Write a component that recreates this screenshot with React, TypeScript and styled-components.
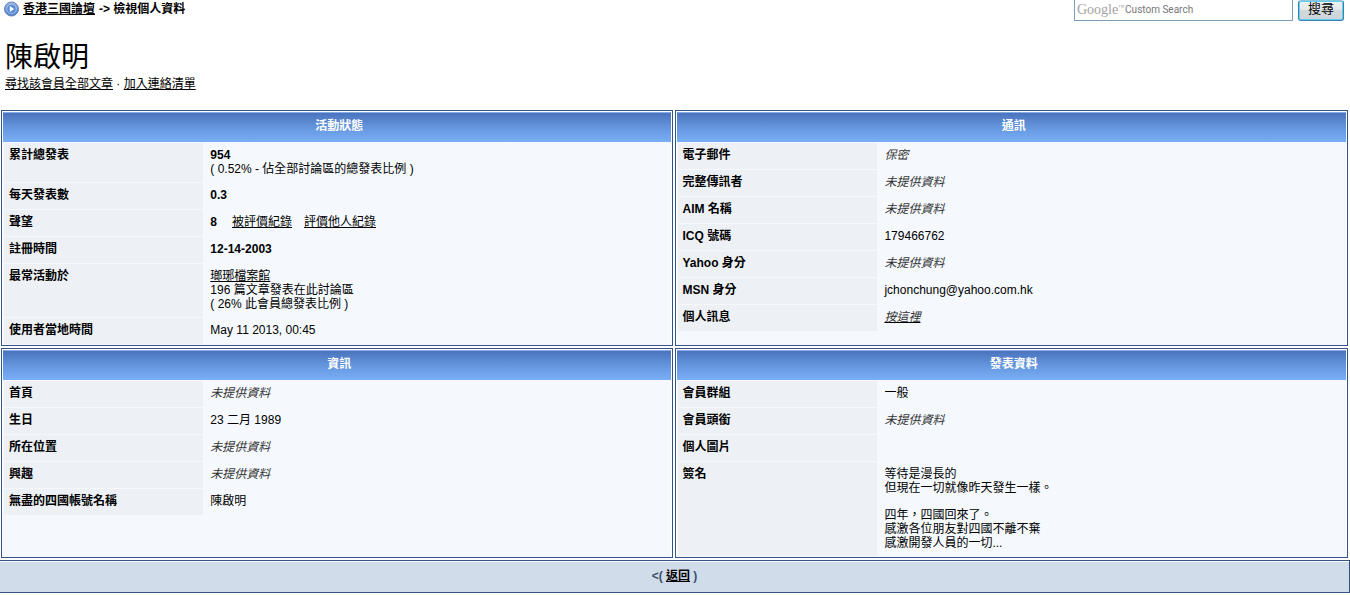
import React from "react";
import styled, { createGlobalStyle } from "styled-components";

const GlobalStyle = createGlobalStyle`
  * { box-sizing: border-box; }
  body {
    margin: 0;
    background: #fff;
    color: #000;
    font: 12px/14px "Liberation Sans", "Noto Sans CJK TC", sans-serif;
  }
  a { color: #000; text-decoration: underline; }
`;

const TopBar = styled.header`
  display: flex;
  justify-content: space-between;
  align-items: flex-start;
  height: 21px;
  padding: 0 6px 0 4px;
`;

const Breadcrumb = styled.nav`
  display: flex;
  align-items: center;
  gap: 4px;
  height: 18px;
  font-weight: bold;
`;

const SearchForm = styled.form`
  display: flex;
  gap: 5px;
`;

const SearchBox = styled.label`
  display: flex;
  align-items: center;
  gap: 1px;
  width: 219px;
  height: 21px;
  padding-left: 2px;
  border: 1px solid #7e9db9;
  border-top: 0;
  background: #fff;
`;

const Brand = styled.span`
  display: flex;
  color: #a3a3a3;
  font-family: "Liberation Serif", serif;
  font-size: 14px;

  sup {
    font-size: 6px;
    line-height: 8px;
    vertical-align: top;
  }
`;

const SearchInput = styled.input`
  flex: 1;
  min-width: 0;
  padding: 0;
  border: 0;
  outline: 0;
  background: transparent;
  font: 10px/14px Roboto, sans-serif;

  &::placeholder { color: #777; opacity: 1; }
`;

const SearchButton = styled.button`
  width: 46px;
  height: 21px;
  padding: 0 0 4px;
  border: 1px solid #3c7fb1;
  border-top-color: #8fc4dd;
  border-radius: 3px;
  background: linear-gradient(#f0f2f3, #e4e8ea 45%, #d3dade 50%, #ccd4d9);
  box-shadow: inset 0 0 0 1px #5fd0f0;
  color: #000;
  font: 13px/16px "Liberation Sans", "Noto Sans CJK TC", sans-serif;
`;

const Member = styled.section`
  padding: 18px 5px 19px;
`;

const MemberName = styled.h1`
  margin: 0;
  font-size: 28px;
  font-weight: 400;
  line-height: 38px;
`;

const MemberLinks = styled.p`
  margin: 0;
`;

const Panels = styled.main`
  display: grid;
  grid-template-columns: calc(50% - 2px) 1fr;
  gap: 2px;
  padding: 0 2px 2px 1px;
`;

const Panel = styled.section`
  padding: 1px 1px 0;
  border: 1px solid #345487;
  background: #f5f9fd;
  background-clip: content-box;
`;

const PanelTitle = styled.h2`
  height: 30px;
  margin: 0;
  padding: 6px 0 0 5px;
  border-top: 1px solid #86abe4;
  background: linear-gradient(#4a74bd, #6496de 50%, #79aff6);
  color: #fff;
  font-size: 12px;
  line-height: 14px;
  text-align: center;
`;

const Details = styled.table`
  width: 100%;
  border-spacing: 1px;
  table-layout: fixed;
`;

const Label = styled.th`
  width: 30%;
  height: 26px;
  padding: 5px 5px 6px;
  background: #edf0f5;
  text-align: left;
  vertical-align: top;
`;

const Value = styled.td`
  padding: 5px 6px 6px;
  vertical-align: top;
`;

const Missing = styled.i`
  color: #333;
`;

const Reputation = styled.div`
  display: flex;
  gap: 12px;

  b { margin-right: 3px; }
`;

const Verse = styled.p`
  margin: 0;

  & + & { margin-top: 13px; }
`;

const Footer = styled.footer`
  height: 33px;
  padding: 8px 0 0;
  border: 1px solid #345487;
  border-left: 0;
  background: #d0dcea;
  box-shadow: inset 0 1px 0 #fff;
  color: #3a4f6c;
  font-weight: bold;
  text-align: center;
`;

const ArrowIcon = () => (
  <svg width="15" height="16" viewBox="0 0 15 16" aria-hidden="true">
    <defs>
      <linearGradient id="orb" x1="0" y1="0" x2="0" y2="1">
        <stop offset="0" stopColor="#9fb8df" />
        <stop offset="1" stopColor="#4a7cc8" />
      </linearGradient>
    </defs>
    <circle cx="7.5" cy="8" r="7" fill="url(#orb)" stroke="#6485bd" />
    <circle cx="7.5" cy="8" r="4.8" fill="#5f8fd8" stroke="#a9c6ee" strokeWidth="0.8" />
    <path d="M5.8 5v6l4.2-3z" fill="#fff" />
  </svg>
);

type Row = [label: string, value: React.ReactNode];

const none = <Missing>未提供資料</Missing>;

const panels: { title: string; rows: Row[] }[] = [
  {
    title: "活動狀態",
    rows: [
      ["累計總發表", <><b>954</b><br />( 0.52% - 佔全部討論區的總發表比例 )</>],
      ["每天發表數", <b>0.3</b>],
      ["聲望", <Reputation><b>8</b><a href="#received">被評價紀錄</a><a href="#given">評價他人紀錄</a></Reputation>],
      ["註冊時間", <b>12-14-2003</b>],
      ["最常活動於", <><a href="#forum">瑯琊檔案館</a><br />196 篇文章發表在此討論區<br />( 26% 此會員總發表比例 )</>],
      ["使用者當地時間", "May 11 2013, 00:45"],
    ],
  },
  {
    title: "通訊",
    rows: [
      ["電子郵件", <Missing>保密</Missing>],
      ["完整傳訊者", none],
      ["AIM 名稱", none],
      ["ICQ 號碼", "179466762"],
      ["Yahoo 身分", none],
      ["MSN 身分", "jchonchung@yahoo.com.hk"],
      ["個人訊息", <a href="#message"><Missing>按這裡</Missing></a>],
    ],
  },
  {
    title: "資訊",
    rows: [
      ["首頁", none],
      ["生日", "23 二月 1989"],
      ["所在位置", none],
      ["興趣", none],
      ["無盡的四國帳號名稱", "陳啟明"],
    ],
  },
  {
    title: "發表資料",
    rows: [
      ["會員群組", "一般"],
      ["會員頭銜", none],
      ["個人圖片", ""],
      [
        "簽名",
        <>
          <Verse>等待是漫長的<br />但現在一切就像昨天發生一樣。</Verse>
          <Verse>四年，四國回來了。<br />感激各位朋友對四國不離不棄<br />感激開發人員的一切...</Verse>
        </>,
      ],
    ],
  },
];

export default function App() {
  return (
    <>
      <GlobalStyle />
      <TopBar>
        <Breadcrumb>
          <ArrowIcon />
          <a href="#home">香港三國論壇</a>
          <span>-&gt; 檢視個人資料</span>
        </Breadcrumb>
        <SearchForm onSubmit={(e) => e.preventDefault()}>
          <SearchBox>
            <Brand>Google<sup>™</sup></Brand>
            <SearchInput type="text" name="q" placeholder="Custom Search" />
          </SearchBox>
          <SearchButton type="submit">搜尋</SearchButton>
        </SearchForm>
      </TopBar>
      <Member>
        <MemberName>陳啟明</MemberName>
        <MemberLinks>
          <a href="#posts">尋找該會員全部文章</a> · <a href="#contacts">加入連絡清單</a>
        </MemberLinks>
      </Member>
      <Panels>
        {panels.map((panel) => (
          <Panel key={panel.title}>
            <PanelTitle>{panel.title}</PanelTitle>
            <Details>
              <tbody>
                {panel.rows.map(([label, value]) => (
                  <tr key={label}>
                    <Label scope="row">{label}</Label>
                    <Value>{value}</Value>
                  </tr>
                ))}
              </tbody>
            </Details>
          </Panel>
        ))}
      </Panels>
      <Footer>
        &lt;( <a href="#back">返回</a> )
      </Footer>
    </>
  );
}
